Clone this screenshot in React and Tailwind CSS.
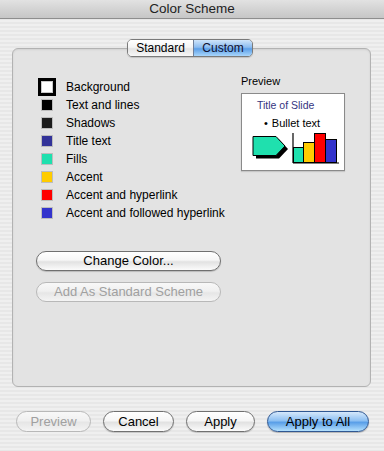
import React from "react";

const swatches = [
  { label: "Background", color: "#ffffff", big: true },
  { label: "Text and lines", color: "#000000" },
  { label: "Shadows", color: "#1c1c1c" },
  { label: "Title text", color: "#333399" },
  { label: "Fills", color: "#1fe0ae" },
  { label: "Accent", color: "#ffcc00" },
  { label: "Accent and hyperlink", color: "#ff0000" },
  { label: "Accent and followed hyperlink", color: "#3333cc" },
];

const aqua =
  "h-[20px] rounded-full border border-[#707070] bg-[linear-gradient(to_bottom,#ffffff_0%,#f6f6f6_45%,#e2e2e2_55%,#fbfbfb_100%)] text-[13px] text-black shadow-[0_1px_1px_rgba(0,0,0,0.18)] flex items-center justify-center";
const aquaDisabled =
  "h-[20px] rounded-full border border-[#b8b8b8] bg-[linear-gradient(to_bottom,#f8f8f8_0%,#f0f0f0_45%,#e6e6e6_55%,#f4f4f4_100%)] text-[13px] text-[#a0a0a0] flex items-center justify-center";
const aquaBlue =
  "h-[21px] rounded-full border border-[#2f5792] bg-[linear-gradient(to_bottom,#d5e8fb_0%,#8ec0f2_45%,#5a9fe8_55%,#b4e0fd_100%)] text-[13px] text-black shadow-[0_1px_1px_rgba(0,0,0,0.25)] flex items-center justify-center";

function Swatch({ color, big }) {
  if (big) {
    return (
      <div className="w-[18px] h-[18px] border-[3px] border-black bg-white flex items-center justify-center">
        <div className="w-[12px] h-[12px] border border-[#c8c8c8] bg-white" />
      </div>
    );
  }
  return (
    <div className="w-[18px] h-[18px] flex items-center justify-center">
      <div
        className="w-[12px] h-[12px] border border-[#bdbdbd]"
        style={{ backgroundColor: color }}
      />
    </div>
  );
}

export default function App() {
  return (
    <div
      className="w-[384px] h-[451px] overflow-hidden bg-[repeating-linear-gradient(to_bottom,#efefef_0px,#efefef_2px,#e7e7e7_2px,#e7e7e7_4px)] text-black"
      style={{ fontFamily: '"Liberation Sans", Arial, sans-serif' }}
    >
      {/* Title bar */}
      <div className="h-[19px] border-b border-[#8e8e8e] bg-[linear-gradient(to_bottom,#e2e2e2,#c6c6c6)] flex items-center justify-center text-[13.5px] text-[#222]">
        Color Scheme
      </div>

      {/* Segmented control */}
      <div className="flex justify-center mt-[20px] relative z-10 pr-[4px]">
        <div className="flex h-[18px] rounded-[5px] border border-[#7a7a7a] overflow-hidden text-[12px] shadow-[0_1px_1px_rgba(0,0,0,0.15)]">
          <div className="w-[65px] flex items-center justify-center bg-[linear-gradient(to_bottom,#ffffff_0%,#f5f5f5_45%,#e4e4e4_55%,#f7f7f7_100%)]">
            Standard
          </div>
          <div className="w-[59px] flex items-center justify-center border-l border-[#6f7f9a] bg-[linear-gradient(to_bottom,#cfe4fa_0%,#8dbdf0_45%,#5c9fe8_55%,#a9d6fb_100%)] text-[#101030]">
            Custom
          </div>
        </div>
      </div>

      {/* Panel */}
      <div className="ml-[12px] mr-[13px] -mt-[9px] h-[339px] rounded-[6px] border border-[#b2b2b2] bg-[#e3e3e3] shadow-[inset_0_1px_2px_rgba(0,0,0,0.08)] flex pl-[23px] pt-[29px]">
        {/* Left column */}
        <div className="w-[205px] flex flex-col">
          <div className="flex flex-col pl-[2px]">
            {swatches.map((s) => (
              <div key={s.label} className="h-[18px] flex items-center gap-[10px] text-[12px]">
                <Swatch color={s.color} big={s.big} />
                <span>{s.label}</span>
              </div>
            ))}
          </div>
          <div className={`${aqua} w-[185px] mt-[29px]`}>Change Color...</div>
          <div className={`${aquaDisabled} w-[185px] mt-[11px]`}>Add As Standard Scheme</div>
        </div>

        {/* Right column */}
        <div className="flex flex-col -mt-[3px]">
          <div className="text-[11px] leading-[12px] h-[12px]">Preview</div>
          <div className="mt-[6px] w-[104px] h-[78px] border border-[#8a8a8a] bg-white shadow-[0_1px_1px_rgba(0,0,0,0.12)] flex flex-col">
            <div className="pl-[15px] mt-[5px] text-[10.5px] leading-[12px] text-[#34347f]">Title of Slide</div>
            <div className="pl-[22px] mt-[6px] text-[11px] leading-[12px] flex gap-[4px]">
              <span>•</span>
              <span>Bullet text</span>
            </div>
            <div className="flex items-start mt-[4px] pl-[10px]">
              <svg width="38" height="24" viewBox="0 0 38 24" className="mt-[3px]">
                <polygon points="4,3.5 27,3.5 36,13 27,22.5 4,22.5" fill="#000" />
                <polygon
                  points="1,0.5 24,0.5 33,10 24,19.5 1,19.5"
                  fill="#1fe0ae"
                  stroke="#000"
                  strokeWidth="1"
                />
              </svg>
              <svg width="48" height="32" viewBox="0 0 48 32" className="ml-[2px]">
                <rect x="1.5" y="14.5" width="10" height="15" fill="#1fe0ae" stroke="#000" strokeWidth="1" />
                <rect x="11.5" y="9.5" width="11" height="20" fill="#ffcc00" stroke="#000" strokeWidth="1" />
                <rect x="22.5" y="0.5" width="11" height="29" fill="#ff0000" stroke="#000" strokeWidth="1" />
                <rect x="33.5" y="6.5" width="11" height="23" fill="#3333cc" stroke="#000" strokeWidth="1" />
                <line x1="1" y1="0" x2="1" y2="30" stroke="#000" strokeWidth="1.2" />
                <line x1="1" y1="30" x2="47" y2="30" stroke="#000" strokeWidth="1.2" />
              </svg>
            </div>
          </div>
        </div>
      </div>

      {/* Bottom buttons */}
      <div className="flex mt-[24px] pl-[16px] gap-[12px]">
        <div className={`${aquaDisabled} w-[75px] h-[21px]`}>Preview</div>
        <div className={`${aqua} w-[71px] h-[21px]`}>Cancel</div>
        <div className={`${aqua} w-[69px] h-[21px]`}>Apply</div>
        <div className={`${aquaBlue} w-[102px]`}>Apply to All</div>
      </div>
    </div>
  );
}
